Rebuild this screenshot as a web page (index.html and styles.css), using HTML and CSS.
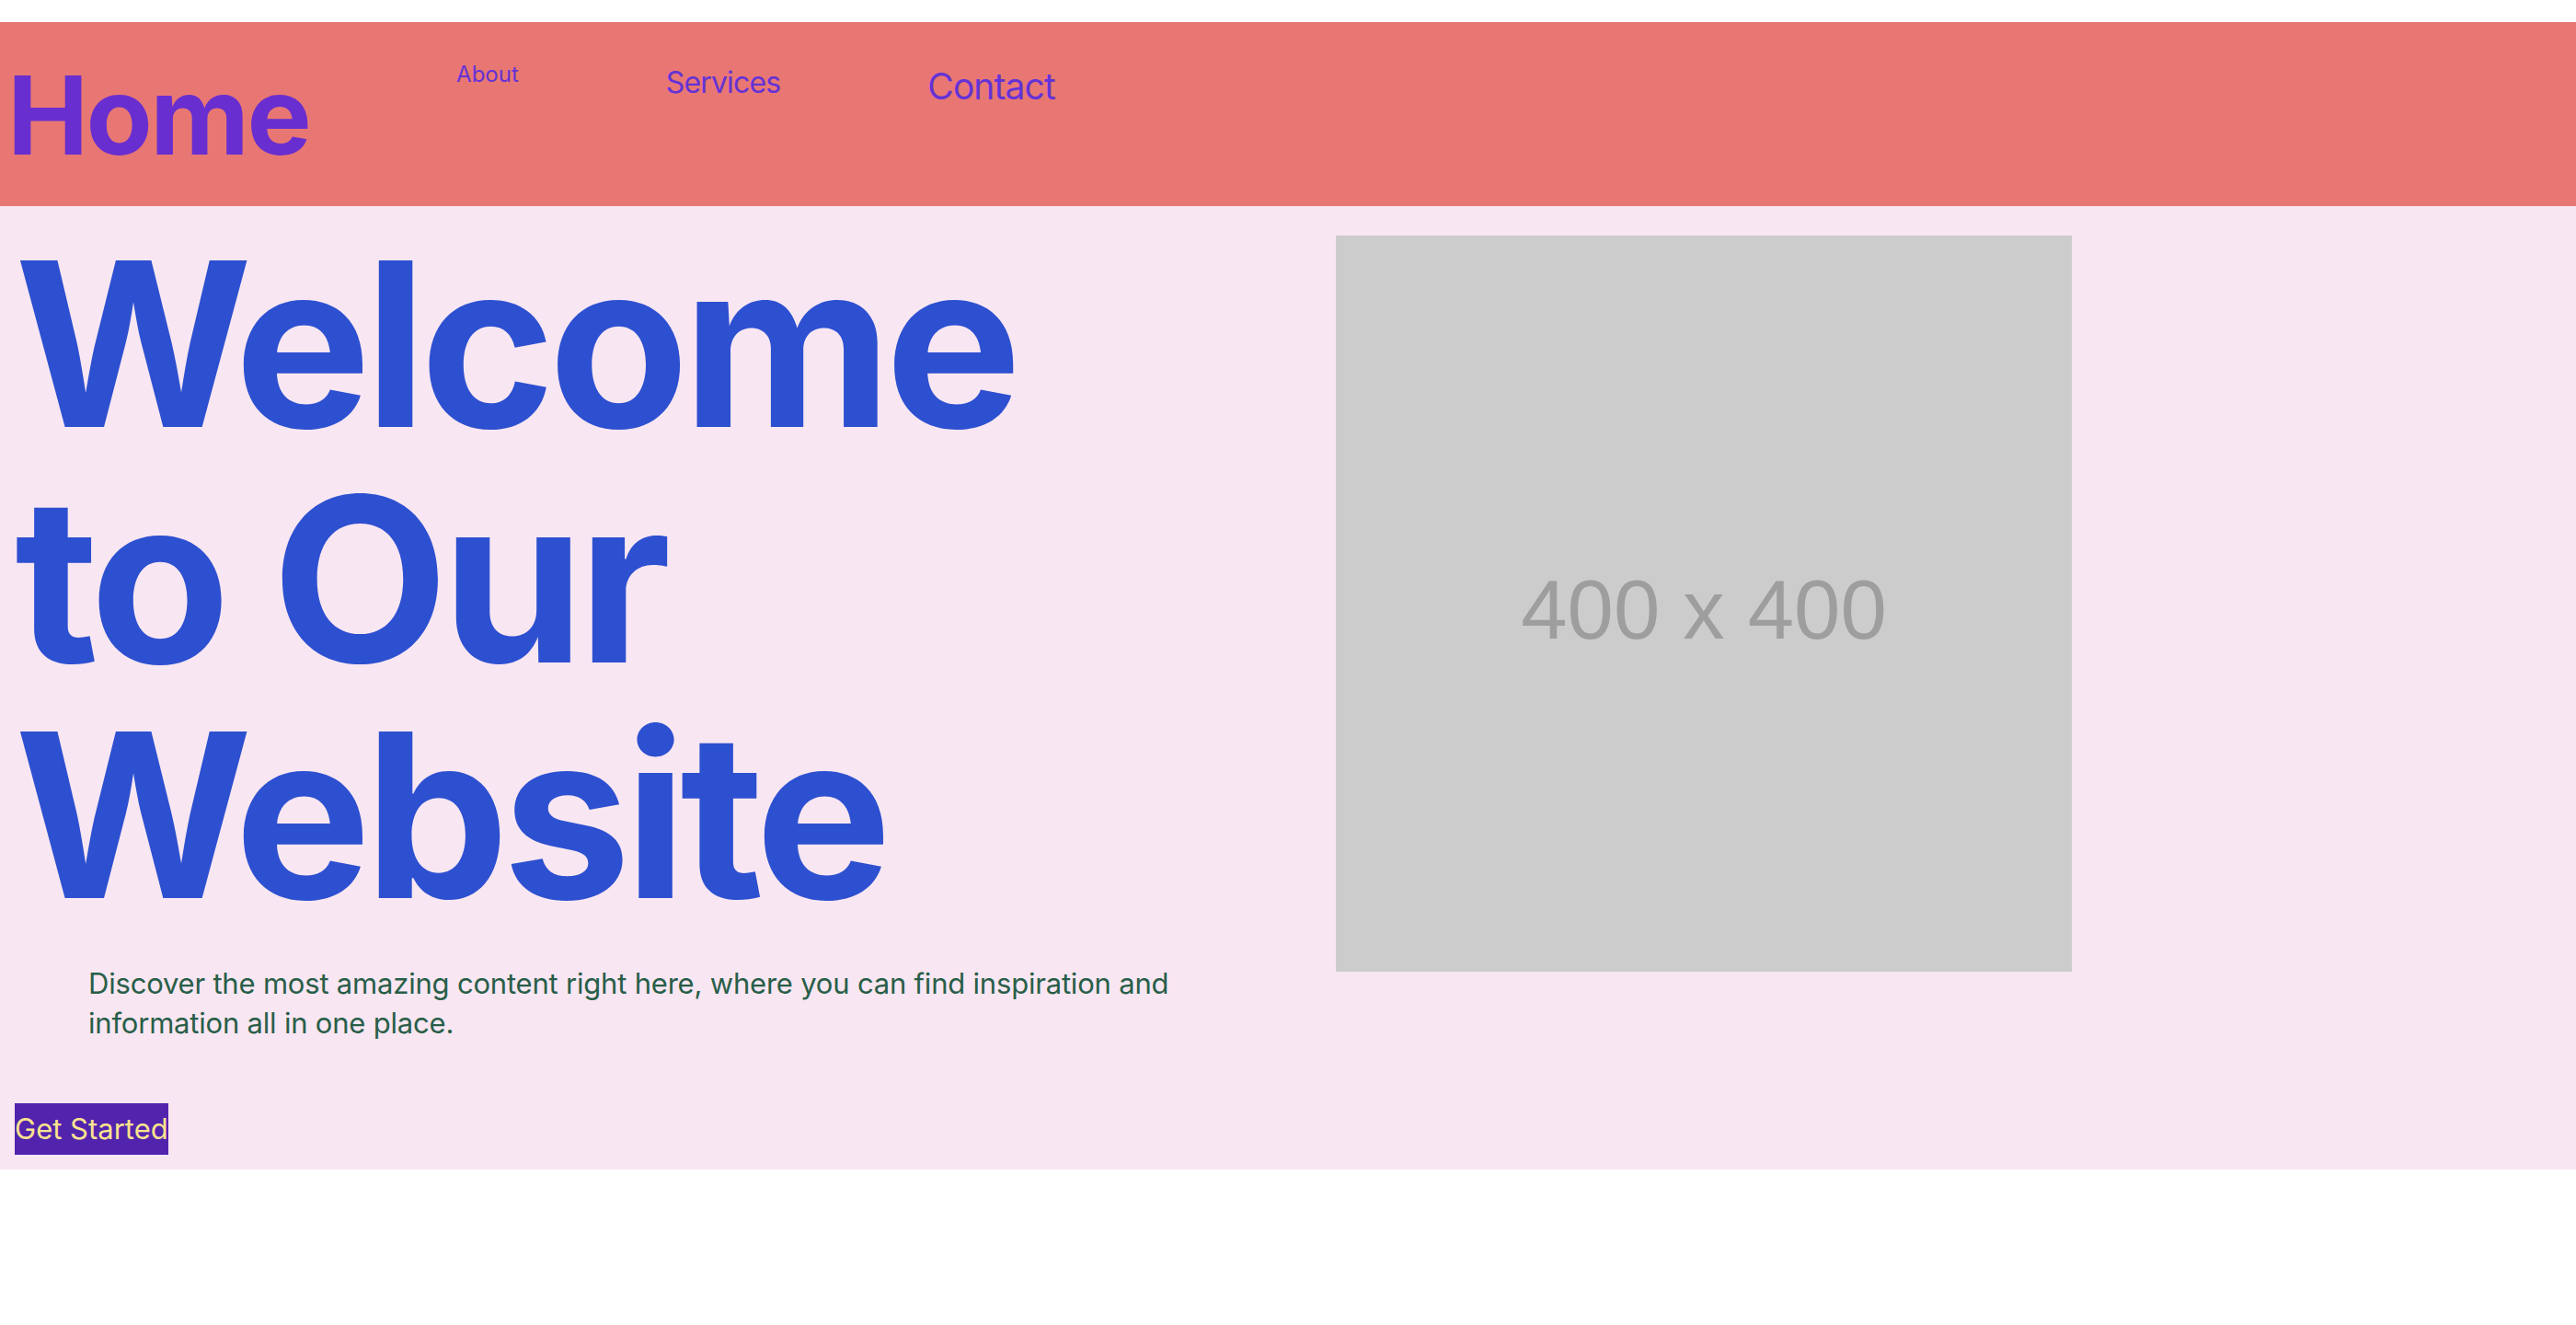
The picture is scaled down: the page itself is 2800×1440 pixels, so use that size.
FILE: index.html
```html
<!DOCTYPE html>
<html lang="en">
<head>
<meta charset="utf-8">
<title>Home</title>
<link rel="stylesheet" href="styles.css">
</head>
<body>
<header class="site-header">
  <h1 class="logo">Home</h1>
  <nav class="nav">
    <a class="nav-link nav-about" href="#">About</a>
    <a class="nav-link nav-services" href="#">Services</a>
    <a class="nav-link nav-contact" href="#">Contact</a>
  </nav>
</header>
<main class="hero">
  <div class="hero-text">
    <h2 class="hero-title">Welcome to Our Website</h2>
    <p class="hero-desc">Discover the most amazing content right here, where you can find inspiration and information all in one place.</p>
    <a class="cta" href="#">Get Started</a>
  </div>
  <div class="hero-media">
    <div class="placeholder">400 x 400</div>
  </div>
</main>
</body>
</html>
```

FILE: styles.css
```css
* { box-sizing: border-box; }

html, body {
  margin: 0;
  padding: 0;
  background: #ffffff;
  font-family: Inter, "Noto Sans", "Liberation Sans", sans-serif;
}

a { text-decoration: none; }

.site-header {
  margin-top: 24px;
  height: 200px;
  background: #e87773;
  display: flex;
  align-items: flex-start;
  gap: 160px;
  padding-left: 8px;
}

.logo {
  margin: 42px 0 0 0;
  font-size: 118px;
  line-height: 1;
  font-weight: 700;
  color: #682ed0;
  letter-spacing: -2.6px;
}

.nav {
  display: flex;
  align-items: flex-start;
  gap: 160px;
}

.nav-link {
  color: #6432d6;
  font-weight: 400;
  line-height: normal;
}

.nav-about {
  font-size: 24px;
  margin-top: 42px;
}

.nav-services {
  font-size: 32px;
  letter-spacing: -0.85px;
  margin-top: 46px;
}

.nav-contact {
  font-size: 39px;
  letter-spacing: -0.9px;
  margin-top: 46px;
}

.hero {
  background: #f8e6f2;
  display: flex;
  align-items: flex-start;
  padding: 22px 0 16px 16px;
}

.hero-text {
  flex: 0 0 1300px;
  display: flex;
  flex-direction: column;
  align-items: flex-start;
}

.hero-title {
  margin: 0;
  font-size: 249px;
  line-height: 256px;
  font-weight: 700;
  color: #2d50d0;
  letter-spacing: -7px;
}

.hero-desc {
  margin: 33px 0 0 80px;
  font-size: 31px;
  line-height: 43px;
  color: #285e48;
  letter-spacing: -0.2px;
}

.cta {
  margin-top: 66px;
  display: inline-block;
  background: #5224ae;
  color: #fbe38e;
  font-size: 31px;
  line-height: 56px;
  padding: 0;
}

.hero-media {
  margin-left: 136px;
  margin-top: 10px;
}

.placeholder {
  width: 800px;
  height: 800px;
  background: #cccccc;
  color: #9e9e9e;
  font-family: "Liberation Sans", Arial, sans-serif;
  font-size: 90.5px;
  display: flex;
  align-items: center;
  justify-content: center;
  padding-top: 14px;
}
```
